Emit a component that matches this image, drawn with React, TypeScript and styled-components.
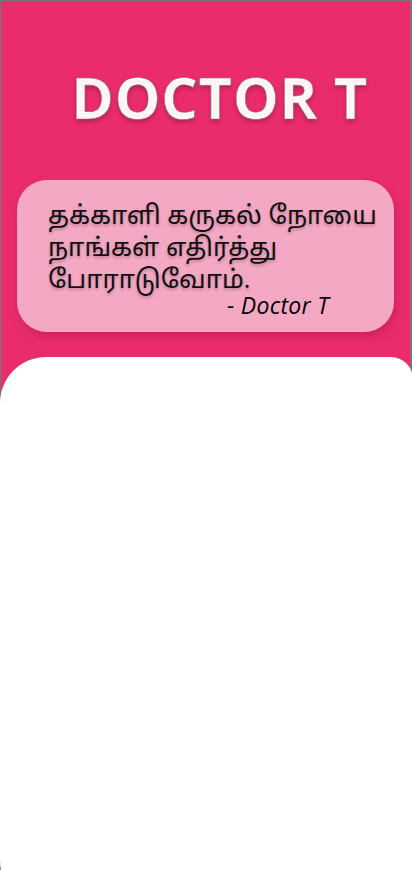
import styled, { createGlobalStyle } from 'styled-components';

const GlobalStyle = createGlobalStyle`
	html, body {
		margin: 0;
		padding: 0;
		background: #767676;
		overflow: hidden;
	}
	#root {
		min-height: 870px;
	}
`;

const App = () => {
	return (
		<>
			<GlobalStyle />
			<Screen>
				<Header>
					<Title>DOCTOR T</Title>
				</Header>
				<QuoteCard>
					<QuoteText>
						தக்காளி கருகல் நோயை
						<br />
						நாங்கள் எதிர்த்து
						<br />
						போராடுவோம்.
					</QuoteText>
					<QuoteAuthor>- Doctor T</QuoteAuthor>
				</QuoteCard>
				<Panel />
			</Screen>
		</>
	);
};

const Screen = styled.div`
	display: flex;
	flex-flow: column;
	height: 905px;
	margin-top: 1px;
	margin-left: 1px;
	margin-right: 2px;
	background-color: #ea2c6c;
	font-family: "Open Sans", "Noto Sans", "Noto Sans Tamil", sans-serif;
`;

const Header = styled.div`
	display: flex;
	justify-content: flex-start;
	padding: 63px 0 0 70px;
	box-sizing: border-box;
	height: 179px;
`;

const Title = styled.h1`
	margin: 0;
	font-family: "Open Sans", sans-serif;
	font-size: 58px;
	font-weight: 700;
	line-height: 66px;
	letter-spacing: 0.5px;
	color: #fff5f5;
	-webkit-text-stroke: 0.6px #8a7077;
	text-shadow: 0 3px 4px rgba(120, 20, 50, 0.45);
`;

const QuoteCard = styled.div`
	display: flex;
	flex-flow: column;
	margin: 0 16px 0 16px;
	padding: 18px 10px 14px 31px;
	height: 152px;
	box-sizing: border-box;
	border-radius: 30px;
	background-color: #f5a8c4;
	box-shadow: 2px 5px 8px rgba(150, 20, 60, 0.35);
`;

const QuoteText = styled.p`
	margin: 0;
	font-size: 25.5px;
	line-height: 32px;
	color: #111;
	white-space: nowrap;
	text-shadow: 0 2px 3px rgba(0, 0, 0, 0.25);
`;

const QuoteAuthor = styled.p`
	margin: -3px 0 0 179px;
	font-size: 23px;
	line-height: 28px;
	font-style: italic;
	letter-spacing: 0.3px;
	color: #000;
`;

const Panel = styled.div`
	flex: 1;
	margin-top: 25px;
	margin-left: -1px;
	margin-right: -3px;
	background-color: #ffffff;
	border-radius: 46px 22px 0 46px;
`;

export default App;
